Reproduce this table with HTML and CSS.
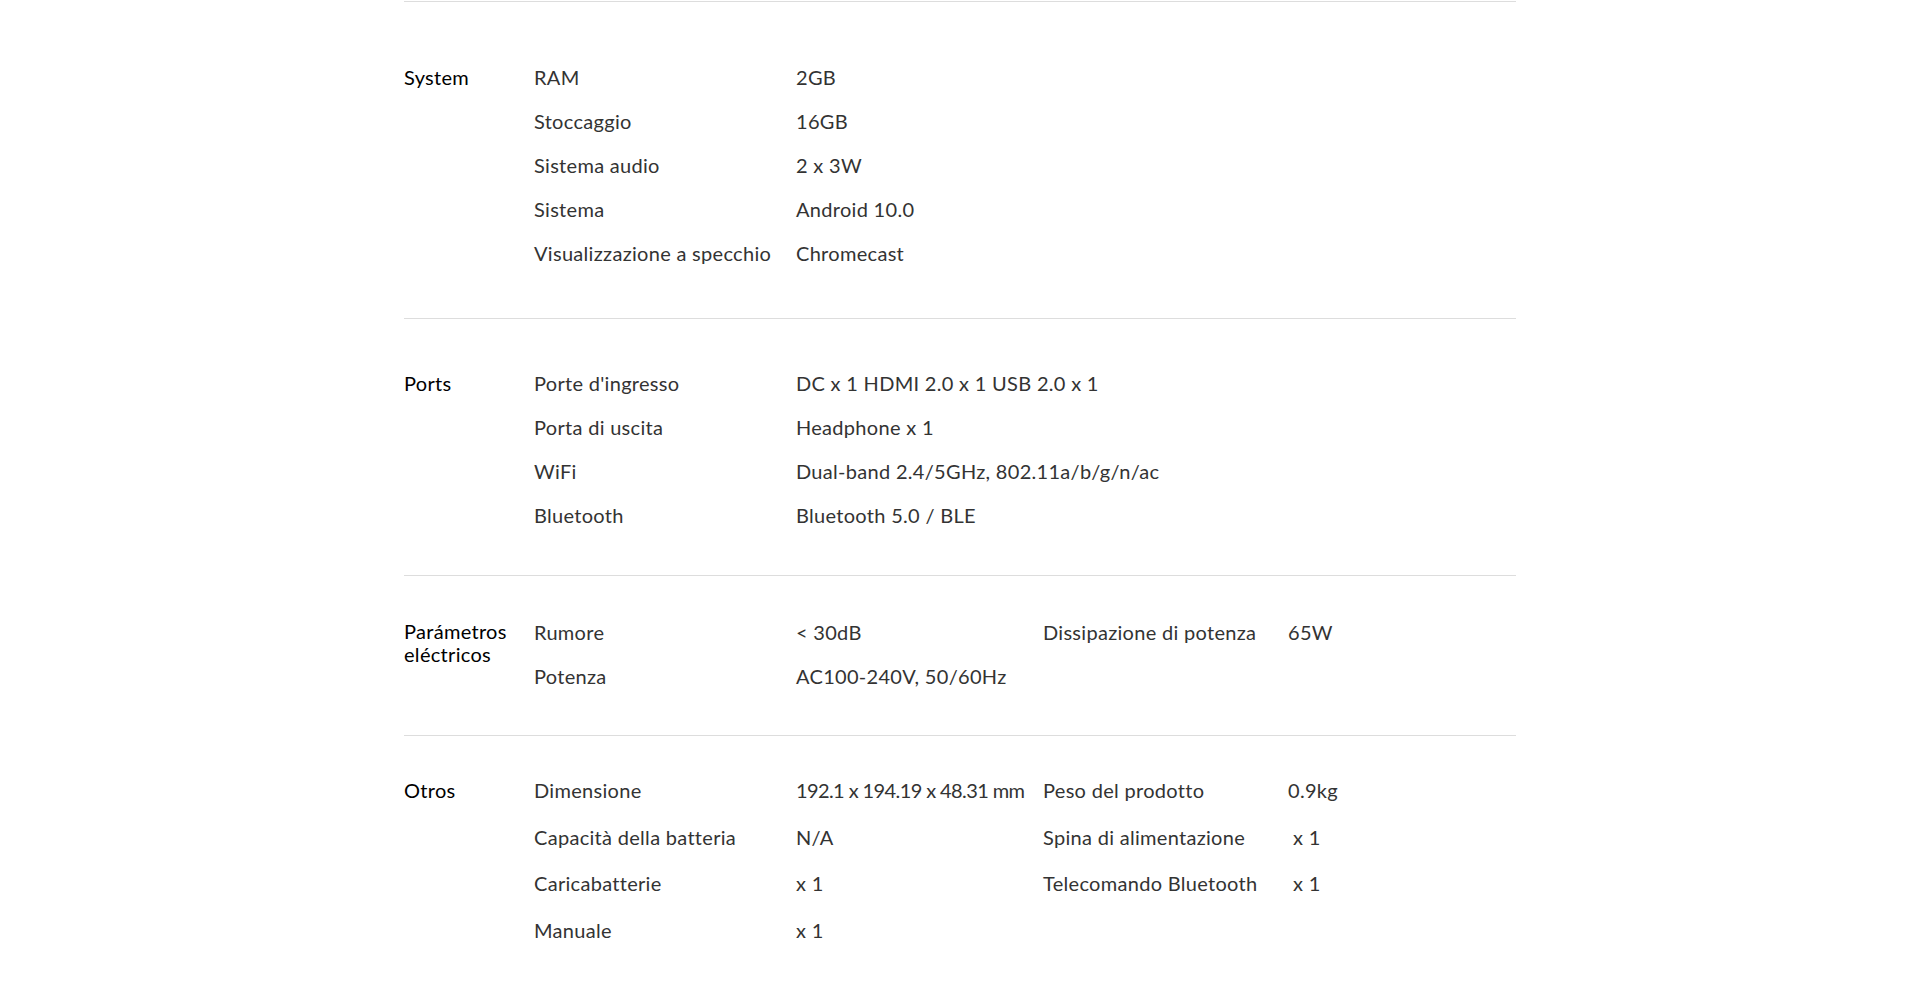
FILE: index.html
```html
<!DOCTYPE html>
<html lang="it">
<head>
<meta charset="utf-8">
<title>Specifiche</title>
<link rel="stylesheet" href="styles.css">
</head>
<body>
<div class="specs">
  <section class="sec sec-1">
    <div class="cat">System</div>
    <div class="rows">
      <div class="row"><span class="lbl">RAM</span><span class="val wide">2GB</span></div>
      <div class="row"><span class="lbl">Stoccaggio</span><span class="val wide">16GB</span></div>
      <div class="row"><span class="lbl">Sistema audio</span><span class="val wide">2 x 3W</span></div>
      <div class="row"><span class="lbl">Sistema</span><span class="val wide">Android 10.0</span></div>
      <div class="row"><span class="lbl">Visualizzazione a specchio</span><span class="val wide">Chromecast</span></div>
    </div>
  </section>
  <section class="sec sec-2">
    <div class="cat">Ports</div>
    <div class="rows">
      <div class="row"><span class="lbl">Porte d'ingresso</span><span class="val wide">DC x 1 HDMI 2.0 x 1 USB 2.0 x 1</span></div>
      <div class="row"><span class="lbl">Porta di uscita</span><span class="val wide">Headphone x 1</span></div>
      <div class="row"><span class="lbl">WiFi</span><span class="val wide">Dual-band 2.4/5GHz, 802.11a/b/g/n/ac</span></div>
      <div class="row"><span class="lbl">Bluetooth</span><span class="val wide">Bluetooth 5.0 / BLE</span></div>
    </div>
  </section>
  <section class="sec sec-3">
    <div class="cat cat-two">Parámetros eléctricos</div>
    <div class="rows">
      <div class="row"><span class="lbl">Rumore</span><span class="val">&lt; 30dB</span><span class="lbl">Dissipazione di potenza</span><span class="val">65W</span></div>
      <div class="row"><span class="lbl">Potenza</span><span class="val wide">AC100-240V, 50/60Hz</span></div>
    </div>
  </section>
  <section class="sec sec-4">
    <div class="cat">Otros</div>
    <div class="rows rows-loose">
      <div class="row"><span class="lbl">Dimensione</span><span class="val tight">192.1 x 194.19 x 48.31 mm</span><span class="lbl">Peso del prodotto</span><span class="val">0.9kg</span></div>
      <div class="row"><span class="lbl">Capacità della batteria</span><span class="val">N/A</span><span class="lbl">Spina di alimentazione</span><span class="val indent">x 1</span></div>
      <div class="row"><span class="lbl">Caricabatterie</span><span class="val">x 1</span><span class="lbl">Telecomando Bluetooth</span><span class="val indent">x 1</span></div>
      <div class="row"><span class="lbl">Manuale</span><span class="val wide">x 1</span></div>
    </div>
  </section>
</div>
</body>
</html>
```

FILE: styles.css
```css
html, body {
  margin: 0;
  padding: 0;
  background: #ffffff;
}

body {
  font-family: Lato, "Liberation Sans", sans-serif;
  font-size: 20px;
  letter-spacing: 0.3px;
  color: #333333;
}

.specs {
  width: 1112px;
  margin: 0 auto 0 404px;
  padding-top: 1px;
}

.sec {
  display: flex;
  border-top: 1px solid #dddddd;
}

.sec-1 { padding: 63px 0 53px; }
.sec-2 { padding: 52px 0 48px; }
.sec-3 { padding: 44px 0 47px; }
.sec-4 { padding: 42px 0 40px; }

.cat {
  width: 130px;
  flex: none;
  color: #000000;
  line-height: 24px;
}

.cat-two {
  line-height: 23px;
  width: 110px;
  margin-right: 20px;
}

.rows {
  flex: 1;
  display: flex;
  flex-direction: column;
  gap: 20px;
}

.rows-loose {
  gap: 22.5px;
}

.row {
  display: grid;
  grid-template-columns: 262px 247px 245px 1fr;
  line-height: 24px;
}

.lbl {
  color: #333333;
  white-space: nowrap;
}

.val {
  color: #333333;
  white-space: nowrap;
}

.val.wide {
  grid-column: 2 / 5;
}

.val.tight {
  letter-spacing: -0.6px;
}

.val.indent {
  padding-left: 5px;
}
```
